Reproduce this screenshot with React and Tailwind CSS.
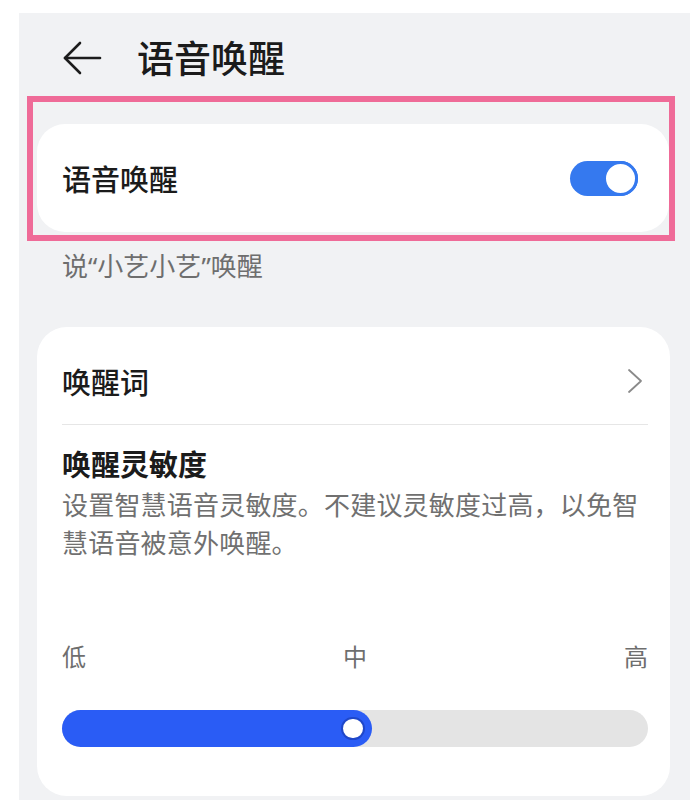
const cjk = { fontFamily: '"Noto Sans CJK SC", "Noto Sans", sans-serif' };
const latin = { fontFamily: '"Noto Sans", sans-serif' };

const BackArrow = () => (
    <svg width="40" height="36" viewBox="0 0 40 36" fill="none" stroke="#1c1c1c" strokeWidth="2.6" strokeLinecap="round" strokeLinejoin="round">
        <path d="M38 18H3" />
        <path d="M18 3L3 18l15 15" />
    </svg>
);

const Chevron = () => (
    <svg width="16" height="26" viewBox="0 0 16 26" fill="none" stroke="#8a8a8a" strokeWidth="1.8" strokeLinecap="round" strokeLinejoin="round">
        <path d="M2 2l12 11L2 24" />
    </svg>
);

const Toggle = () => (
    <div className="w-[68px] h-[35px] rounded-full bg-[#3579ef] flex items-center justify-end">
        <div className="w-[35px] h-[35px] rounded-full bg-white border-[3px] border-[#3579ef]" />
    </div>
);

const Slider = () => (
    <div className="relative h-[37px] rounded-full bg-[#e4e4e4]">
        <div className="h-full w-[310px] rounded-full bg-[#2a5cf5] flex items-center justify-end pr-[7px]">
            <div className="w-[24px] h-[23px] rounded-full bg-white border-2 border-[#1f47c9]" />
        </div>
    </div>
);

export default function App() {
    return (
        <div className="w-[692px] h-[800px] bg-white overflow-hidden" style={cjk}>
            <div className="ml-[19px] mt-[13px] w-[671px] h-[787px] bg-[#f1f2f4]">
                {/* Header */}
                <div className="h-[83px] flex items-center pl-[43px] pt-[6px]">
                    <BackArrow />
                    <h1 className="ml-[35px] text-[37px] leading-none font-medium text-[#1b1b1b]">语音唤醒</h1>
                </div>

                {/* Highlighted switch */}
                <div className="ml-[8px] w-[648px] border-[6px] border-[#ef6b98] pl-[4px] pt-[22px] pb-[3px]">
                    <div className="h-[108px] bg-white rounded-[28px] flex items-center justify-between pl-[25px] pr-[31px]">
                        <span className="text-[29px] leading-none font-medium text-[#1b1b1b]">语音唤醒</span>
                        <Toggle />
                    </div>
                </div>
                <p className="ml-[43px] mt-[7px] text-[26px] leading-[34px] text-[#6e6e6e]">
                    说<span style={latin}>“</span>小艺小艺<span style={latin}>”</span>唤醒
                </p>

                {/* Settings card */}
                <div className="ml-[18px] mt-[44px] w-[633px] bg-white rounded-[30px] pl-[25px] pr-[22px] pb-[49px]">
                    <div className="pt-[36px] pb-[25px] flex items-center justify-between">
                        <span className="text-[29px] leading-[36px] font-medium text-[#1b1b1b]">唤醒词</span>
                        <span className="mr-[5px]"><Chevron /></span>
                    </div>
                    <div className="h-px bg-[#e6e6e6]" />
                    <div className="mt-[20px] text-[29px] leading-[36px] font-semibold text-[#1b1b1b]">唤醒灵敏度</div>
                    <p className="mt-[4px] text-[26px] leading-[38px] text-[#707070] tracking-[0.2px]">
                        设置智慧语音灵敏度。不建议灵敏度过高，以免智慧语音被意外唤醒。
                    </p>
                    <div className="mt-[78px] flex justify-between text-[24px] leading-[34px] text-[#6e6e6e]">
                        <span>低</span>
                        <span>中</span>
                        <span>高</span>
                    </div>
                    <div className="mt-[37px]">
                        <Slider />
                    </div>
                </div>
            </div>
        </div>
    );
}
